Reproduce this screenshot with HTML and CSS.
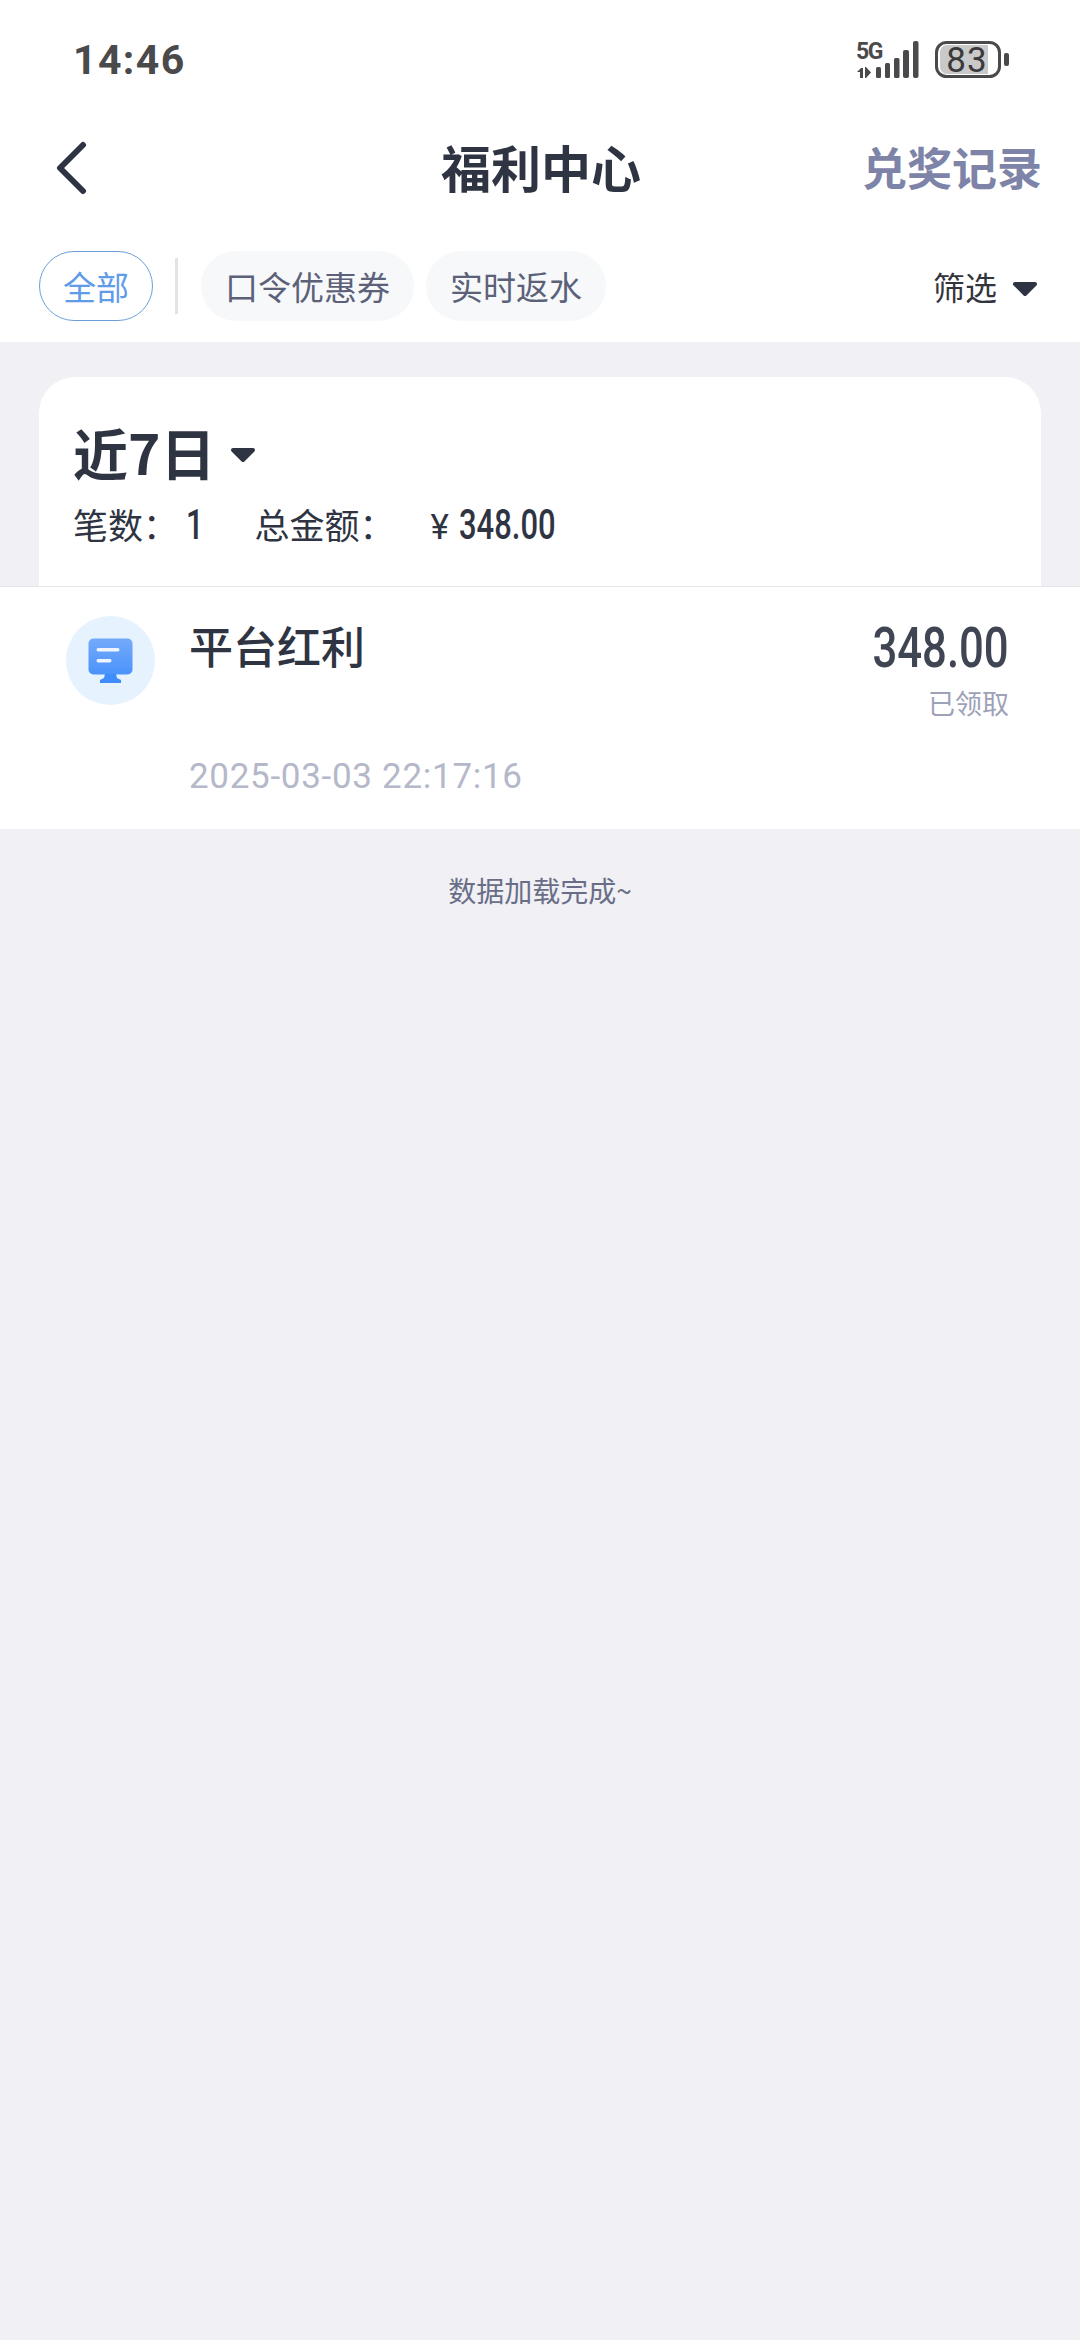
FILE: index.html
```html
<!DOCTYPE html>
<html lang="zh-CN">
<head>
<meta charset="utf-8">
<title>福利中心</title>
<link rel="stylesheet" href="styles.css">
</head>
<body>
<header class="top">
  <div class="status">
    <span class="time">14:46</span>
    <svg class="status-icons" width="154" height="40" viewBox="0 0 154 40">
      <text x="0" y="19" class="net">5G</text>
      <path d="M1 32l4-4h2v10H4v-6zM9 27h1l5 5.500-5 5.500H9z" fill="#4a4a4c"/>
      <rect x="20" y="27" width="5" height="11" rx="1.500" fill="#4a4a4c"/>
      <rect x="29" y="23" width="5" height="15" rx="1.500" fill="#4a4a4c"/>
      <rect x="38" y="18" width="5.500" height="20" rx="1.500" fill="#4a4a4c"/>
      <rect x="47" y="10" width="6" height="28" rx="2" fill="#4a4a4c"/>
      <rect x="57" y="1" width="5.500" height="37" rx="2" fill="#4a4a4c"/>
      <path d="M84 12a7 7 0 0 1 7-7h41v29H91a7 7 0 0 1-7-7z" fill="#c9c9c9"/>
      <rect x="80.500" y="2.500" width="63" height="34" rx="10" fill="none" stroke="#4a4a4c" stroke-width="3"/>
      <rect x="148" y="13" width="5" height="13" rx="2" fill="#4a4a4c"/>
      <text x="111" y="31.500" class="level">83</text>
    </svg>
  </div>
  <nav class="nav">
    <svg class="back" width="32" height="54" viewBox="0 0 32 54"><path d="M28 4L5 27l23 23" fill="none" stroke="#2f3442" stroke-width="6" stroke-linecap="round" stroke-linejoin="round"/></svg>
    <h1 class="title">福利中心</h1>
    <a class="record">兑奖记录</a>
  </nav>
  <div class="tabs">
    <span class="pill pill-active">全部</span>
    <span class="divider"></span>
    <span class="pill">口令优惠券</span>
    <span class="pill">实时返水</span>
    <span class="filter">筛选
      <svg class="caret" width="26" height="16" viewBox="0 0 26 16"><path d="M3 3h20l-10 10z" fill="#2f3442" stroke="#2f3442" stroke-width="4" stroke-linejoin="round"/></svg>
    </span>
  </div>
</header>
<main class="main">
  <section class="card">
    <div class="period">近7日
      <svg class="caret-period" width="26" height="16" viewBox="0 0 26 16"><path d="M3 3h20l-10 10z" fill="#2f3442" stroke="#2f3442" stroke-width="4" stroke-linejoin="round"/></svg>
    </div>
    <div class="summary">
      <span>笔数：<b class="num count">1</b></span>
      <span class="total">总金额：<span class="yen">¥</span><b class="num money">348.00</b></span>
    </div>
  </section>
  <section class="row">
    <div class="avatar">
      <svg width="50" height="50" viewBox="0 0 50 50">
        <defs><linearGradient id="g" x1="0" y1="0" x2="0" y2="1"><stop offset="0" stop-color="#74aafa"/><stop offset="1" stop-color="#4a93fb"/></linearGradient></defs>
        <rect x="2.500" y="2.500" width="44" height="36" rx="5" fill="url(#g)"/>
        <path d="M19 38h11l1 4 4 2v3H14v-3l4-2z" fill="#3f8cfb"/>
        <rect x="10.500" y="12" width="23" height="3.500" rx="1.750" fill="#fff" opacity=".9"/>
        <rect x="10.500" y="23" width="15" height="3.500" rx="1.750" fill="#fff" opacity=".9"/>
      </svg>
    </div>
    <div class="info">
      <div class="name">平台红利</div>
      <div class="date">2025-03-03 22:17:16</div>
    </div>
    <div class="amount">
      <div class="value">348.00</div>
      <div class="state">已领取</div>
    </div>
  </section>
  <p class="done">数据加载完成~</p>
</main>
</body>
</html>
```
FILE: styles.css
```css
* { box-sizing: border-box; }
html, body { margin: 0; padding: 0; }
body {
  width: 1080px;
  height: 2340px;
  background: #f0f0f5;
  font-family: "Noto Sans CJK SC", Roboto, sans-serif;
  color: #2f3442;
  overflow: hidden;
}
.top { background: #fff; height: 342px; }
.status {
  height: 112px;
  padding: 0 70px 0 73px;
  display: flex;
  align-items: center;
  justify-content: space-between;
}
.time {
  font: 700 41px/1 Roboto, sans-serif;
  color: #4a4a4c;
  letter-spacing: 1.400px;
  margin-top: 8px;
}
.status-icons { margin-top: 8px; display: block; }
.net { font: 700 23px Roboto, sans-serif; fill: #4a4a4c; letter-spacing: -1.500px; }
.level { font: 400 35px Roboto, sans-serif; fill: #3a3a3c; text-anchor: middle; letter-spacing: 1px; }
.nav {
  height: 115px;
  padding: 0 38px 7px;
  display: grid;
  grid-template-columns: 1fr auto 1fr;
  align-items: center;
}
.back { display: block; margin-left: 17px; margin-top: 3px; }
.title { margin: 0 0 0 2px; font-size: 50px; line-height: 1; font-weight: 700; color: #2f3442; }
.record { justify-self: end; font-size: 45px; line-height: 1; font-weight: 700; color: #7d84a8; }
.tabs {
  padding: 24px 42px 0 39px;
  display: flex;
  align-items: center;
}
.pill {
  height: 70px;
  padding: 0 24px;
  border-radius: 35px;
  background: #f7f8fa;
  color: #5b6178;
  font-size: 33px;
  line-height: 70px;
  margin-right: 12px;
}
.pill-active {
  width: 114px;
  padding: 0;
  text-align: center;
  background: #fff;
  color: #5f9be8;
  line-height: 68px;
  border: 1px solid #6b9fd8;
  margin-right: 22px;
}
.divider { width: 3px; height: 56px; background: #e2e3e8; margin-right: 23px; }
.filter {
  margin-left: auto;
  display: flex;
  align-items: center;
  font-size: 32px;
  color: #33353d;
}
.caret { display: block; margin-left: 15px; margin-top: 6px; }
.card {
  margin: 35px 39px 0;
  height: 209px;
  background: #fff;
  border-radius: 36px 36px 0 0;
  padding: 38px 34px 0;
}
.period {
  display: flex;
  align-items: center;
  font-size: 55px;
  line-height: 72px;
  font-weight: 700;
  color: #2f3442;
}
.caret-period { display: block; margin-left: 15px; margin-top: 8px; }
.summary {
  display: flex;
  align-items: baseline;
  font-size: 35px;
  line-height: 48px;
  margin-top: 13px;
  color: #2f3442;
}
.num {
  display: inline-block;
  font-family: Roboto, sans-serif;
  font-weight: 500;
  font-size: 43px;
  line-height: 48px;
  transform: scaleX(.72);
  transform-origin: left center;
}
.count { margin-left: 8px; margin-right: -6px; }
.money { margin-left: 10px; margin-right: -37px; }
.yen { font-family: Roboto, sans-serif; font-size: 35px; margin-left: 36px; }
.total { margin-left: 50px; }
.row {
  height: 243px;
  background: #fff;
  border-top: 1px solid #e6e6ea;
  padding: 29px 71px 0 66px;
  display: flex;
  align-items: flex-start;
}
.avatar {
  width: 89px;
  height: 89px;
  border-radius: 50%;
  background: #e6f2fe;
  display: flex;
  align-items: center;
  justify-content: center;
  flex: none;
}
.info { margin-left: 34px; flex: 1; }
.name { font-size: 44px; line-height: 52px; font-weight: 500; color: #2f3442; margin-top: 3px; }
.date {
  margin-top: 84px;
  font: 400 35px/44px Roboto, sans-serif;
  color: #b5b8c9;
  letter-spacing: .7px;
}
.amount { text-align: right; padding-top: 3px; }
.value {
  font: 500 56px/58px Roboto, sans-serif;
  color: #404554;
  display: inline-block;
  transform: scaleX(.78);
  transform-origin: right center;
}
.state { font-size: 27px; line-height: 36px; color: #9da2b8; margin-top: 8px; }
.done {
  margin: 41px 0 0;
  text-align: center;
  font-size: 28px;
  line-height: 40px;
  color: #696e86;
}
```
